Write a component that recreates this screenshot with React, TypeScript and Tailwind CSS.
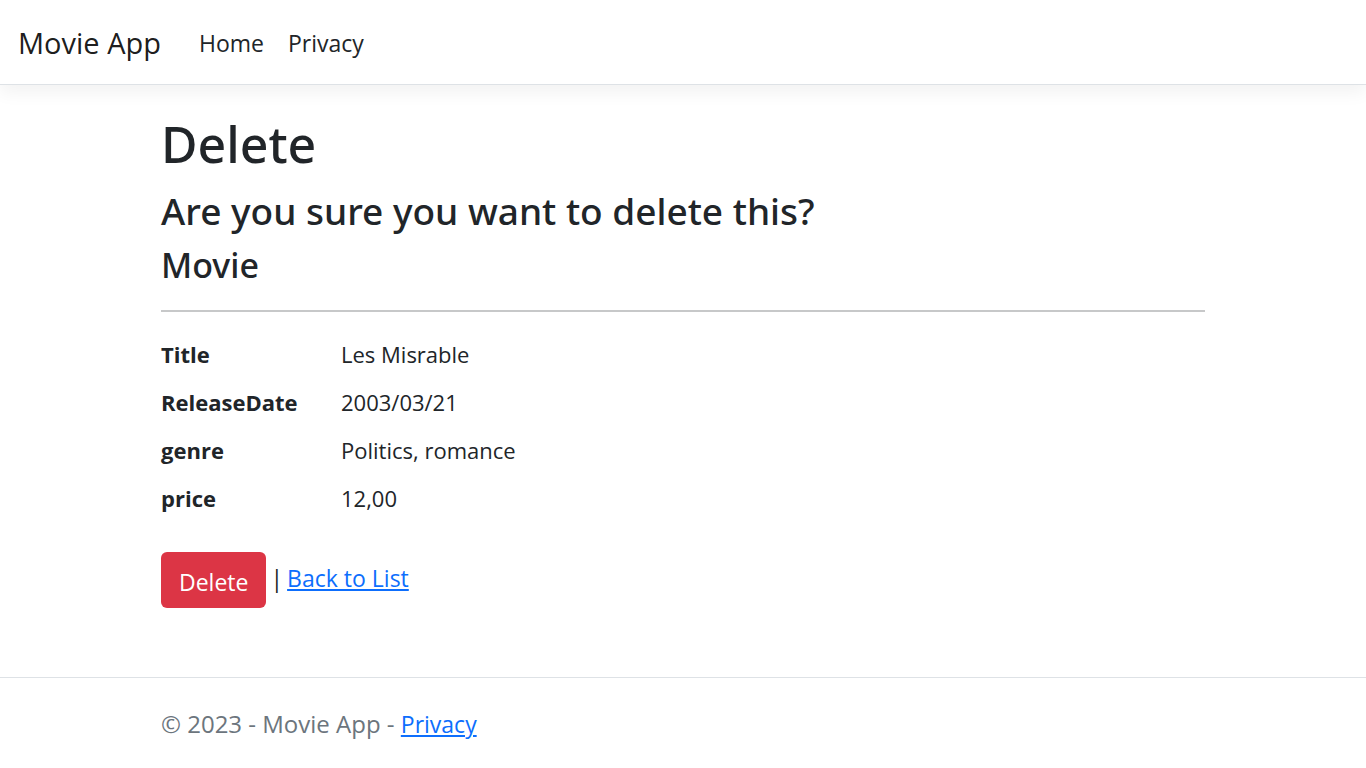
const movie = [
  { name: "Title", value: "Les Misrable" },
  { name: "ReleaseDate", value: "2003/03/21" },
  { name: "genre", value: "Politics, romance" },
  { name: "price", value: "12,00" },
];

export default function App() {
  return (
    <div className="flex min-h-screen flex-col bg-white font-['Open_Sans','Noto_Sans',sans-serif] text-[23px] text-[#212529]">
      <header className="border-b border-[#dee2e6] shadow-[0_8px_16px_rgba(0,0,0,0.05)]">
        <nav className="flex h-21 items-center px-4.5 pt-0.5">
          <a href="#" className="mr-9.5 text-[29px] text-black/90">Movie App</a>
          <ul className="flex gap-6">
            <li><a href="#">Home</a></li>
            <li><a href="#">Privacy</a></li>
          </ul>
        </nav>
      </header>

      <main className="mx-auto w-full max-w-[1044px] grow pt-[29px]">
        <h1 className="font-['Noto_Sans',sans-serif] text-[50px] leading-15 font-medium">Delete</h1>
        <h3 className="mt-3 font-['Noto_Sans',sans-serif] text-[37px] leading-[50px] font-medium">Are you sure you want to delete this?</h3>
        <h4 className="mt-2 font-['Noto_Sans',sans-serif] text-[34px] leading-[42px] font-medium">Movie</h4>
        <hr className="my-6 border-t-2 border-[#c7c8c9]" />
        <dl className="grid grid-cols-[180px_1fr] gap-y-3 text-[22px] leading-9">
          {movie.map((field) => (
            <div key={field.name} className="contents">
              <dt className="font-bold">{field.name}</dt>
              <dd>{field.value}</dd>
            </div>
          ))}
        </dl>
        <form className="mt-9 flex items-start" onSubmit={(e) => e.preventDefault()}>
          <button type="submit" className="h-14 rounded-md bg-[#dc3545] px-4.5 pt-1 text-white">Delete</button>
          <span className="mx-1 pt-2 leading-9">|</span>
          <a href="#" className="pt-2 leading-9 text-[#0d6efd] underline">Back to List</a>
        </form>
      </main>

      <footer className="border-t border-[#dee2e6] text-[#6c757d]">
        <div className="mx-auto h-[90px] w-full max-w-[1044px] pt-7 text-2xl leading-9">
          © 2023 - Movie App - <a href="#" className="text-[23px] text-[#0d6efd] underline">Privacy</a>
        </div>
      </footer>
    </div>
  );
}
